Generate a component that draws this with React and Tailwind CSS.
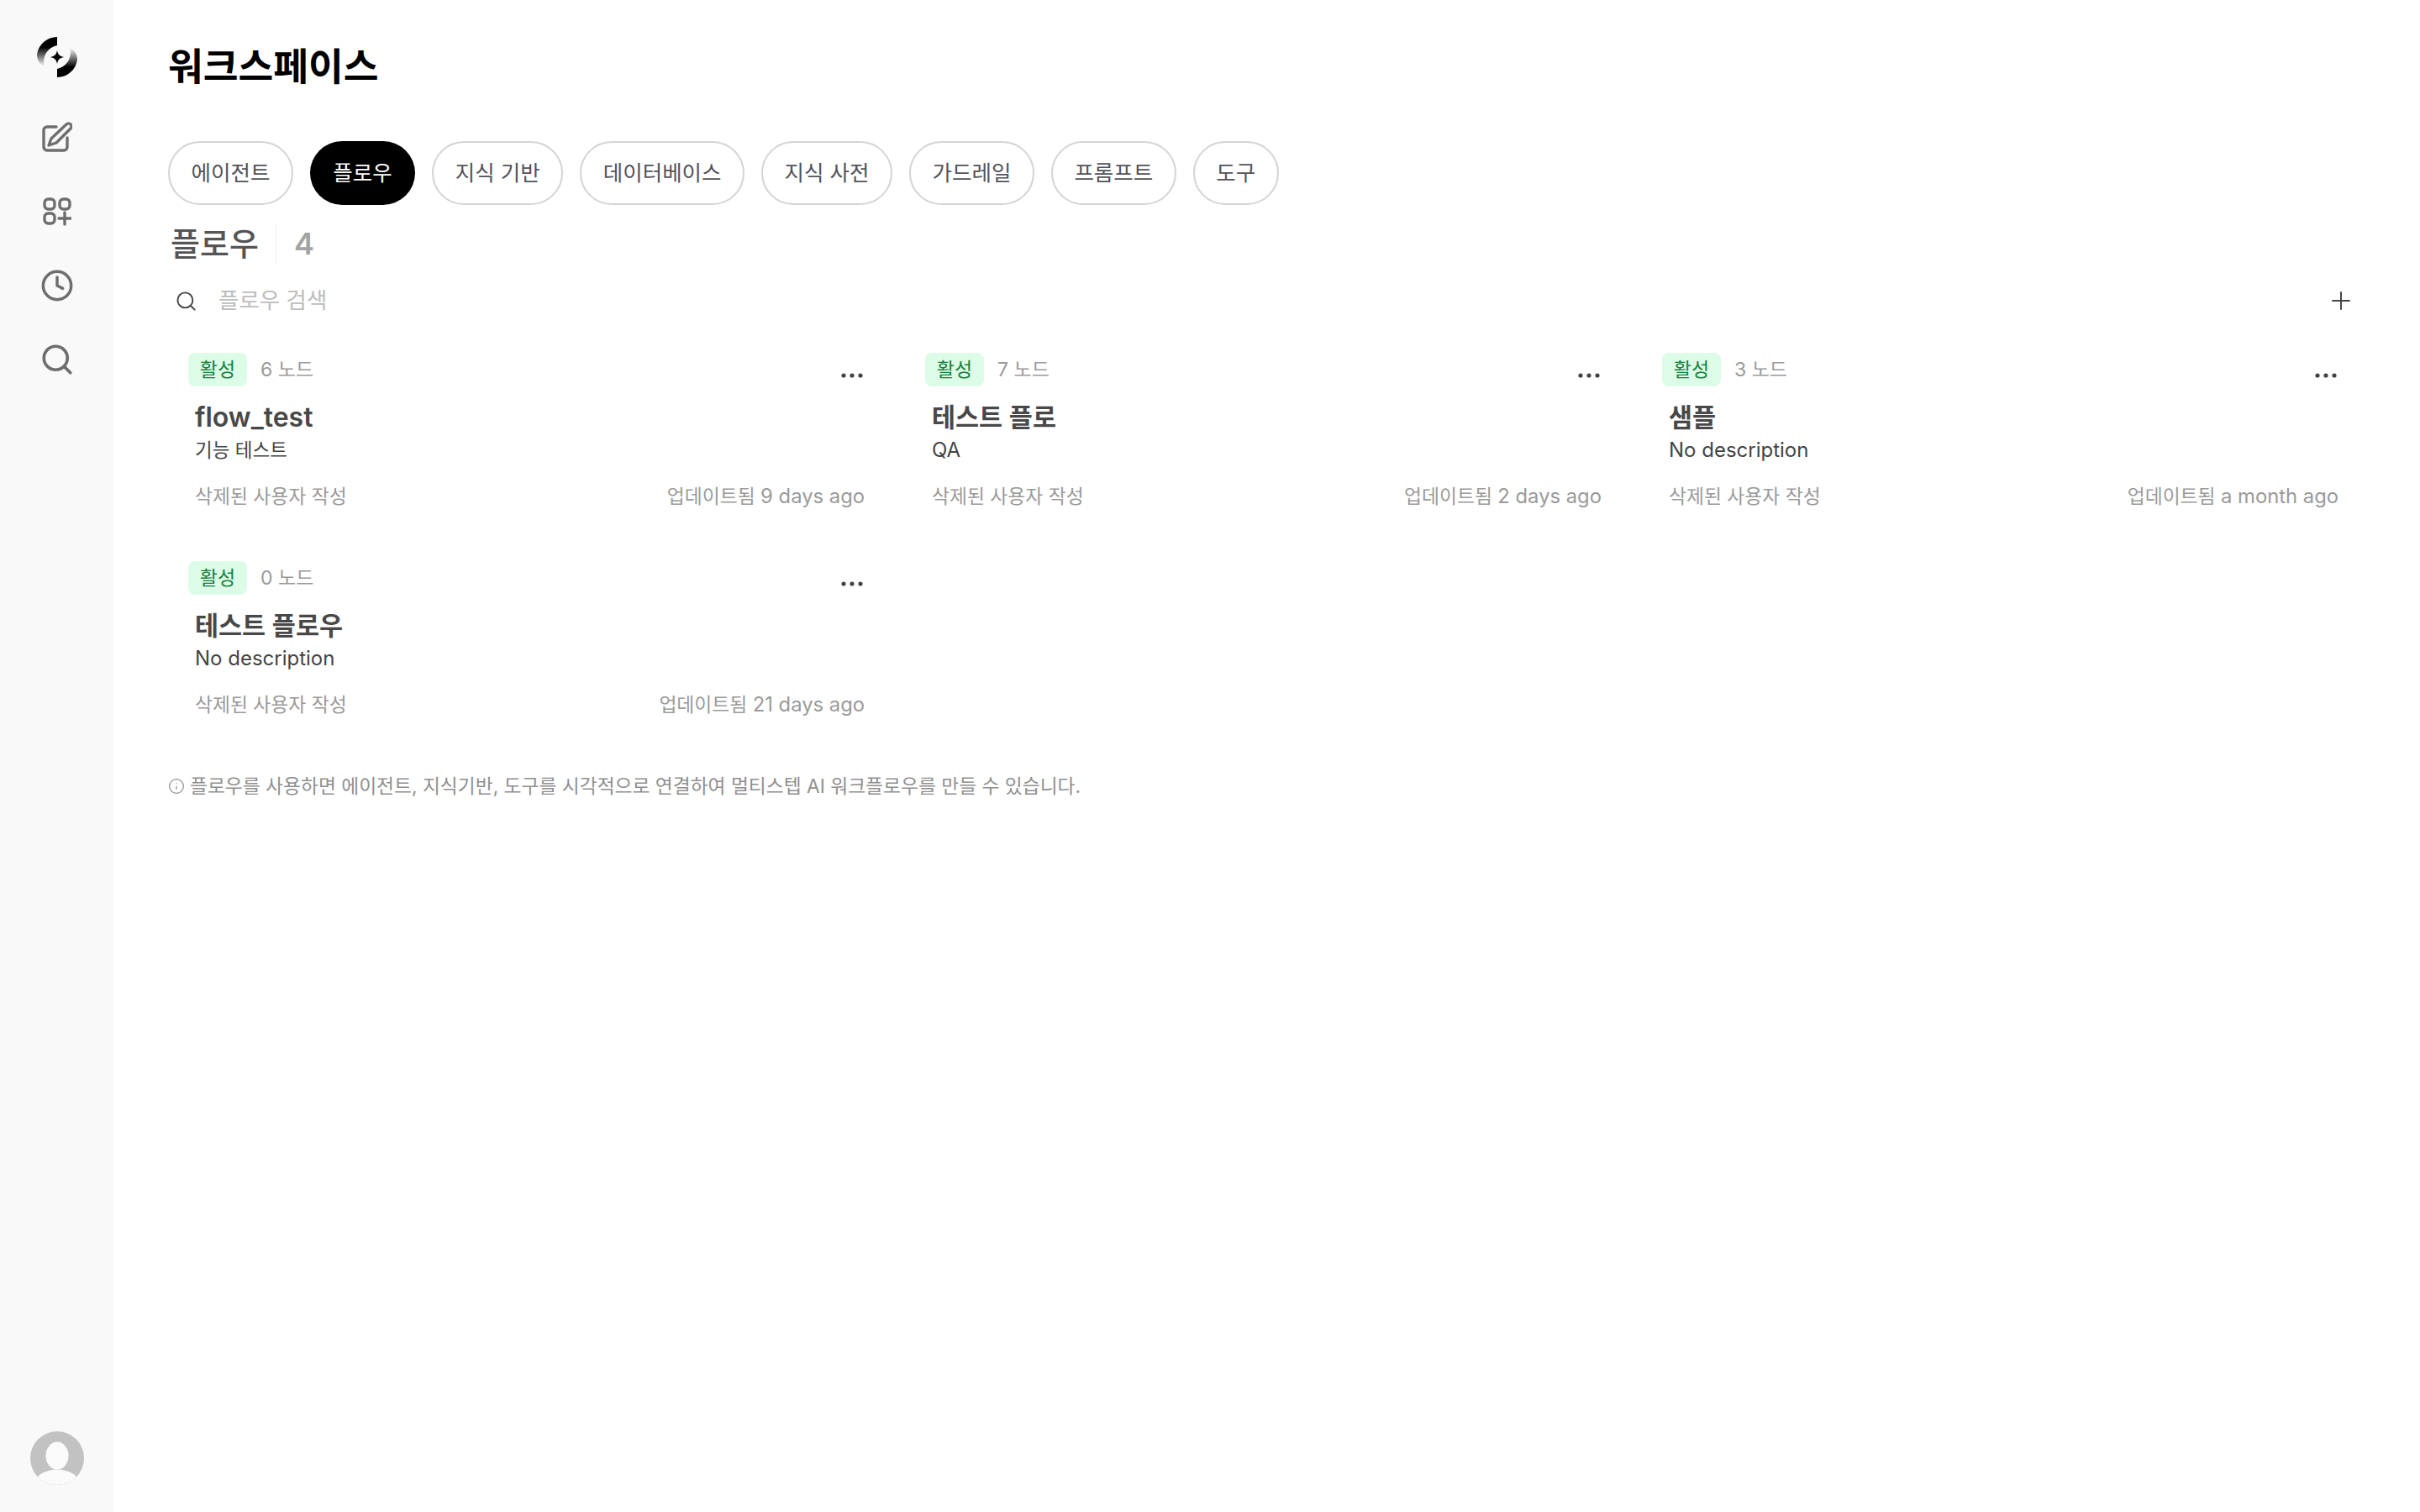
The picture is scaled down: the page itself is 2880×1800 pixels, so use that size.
import React from 'react';
import { Clock, Search, Plus, Info } from 'lucide-react';

const font = { fontFamily: '"Inter", "Noto Sans CJK KR", sans-serif' };

const tabs = ['에이전트', '플로우', '지식 기반', '데이터베이스', '지식 사전', '가드레일', '프롬프트', '도구'];

const flows = [
  { nodes: 6, title: 'flow_test', titleSize: 'text-[32px]', desc: '기능 테스트', descSize: 'text-[22.5px]', updated: '9 days ago' },
  { nodes: 7, title: '테스트 플로', titleSize: 'text-[30.5px]', desc: 'QA', descSize: 'text-[24px]', updated: '2 days ago' },
  { nodes: 3, title: '샘플', titleSize: 'text-[30.5px]', desc: 'No description', descSize: 'text-[24px]', updated: 'a month ago' },
  { nodes: 0, title: '테스트 플로우', titleSize: 'text-[30.5px]', desc: 'No description', descSize: 'text-[24px]', updated: '21 days ago' },
];

const Logo = () => (
  <svg width="48" height="48" viewBox="0 0 48 48">
    <defs>
      <linearGradient id="logoA" x1="0" y1="0" x2="0" y2="1">
        <stop offset="0.35" stopColor="#000" />
        <stop offset="1" stopColor="#000" stopOpacity="0" />
      </linearGradient>
      <linearGradient id="logoB" x1="0" y1="1" x2="0" y2="0">
        <stop offset="0.35" stopColor="#000" />
        <stop offset="1" stopColor="#000" stopOpacity="0" />
      </linearGradient>
    </defs>
    <path d="M24 0 A24 24 0 0 0 0 21 C0 28 4 33 9 35 C6 27 10 13 24 10 Z" fill="url(#logoA)" />
    <path d="M24 48 A24 24 0 0 0 48 27 C48 20 44 15 39 13 C42 21 38 35 24 38 Z" fill="url(#logoB)" />
    <path d="M24 16 C25 21 27 23 32 24 C27 25 25 27 24 32 C23 27 21 25 16 24 C21 23 23 21 24 16 Z" fill="#000" />
  </svg>
);

const EditIcon = () => (
  <svg width="36" height="36" viewBox="0 0 36 36" fill="none" stroke="#6e6e6e" strokeWidth="3.4" strokeLinecap="round" strokeLinejoin="round">
    <path d="M17 6 H6 a4 4 0 0 0 -4 4 V30 a4 4 0 0 0 4 4 H26 a4 4 0 0 0 4 -4 V19" />
    <path d="M29 3 a3 3 0 0 1 5 5 L17 25 L8 28 L11 20 Z" />
  </svg>
);

const AppsIcon = () => (
  <svg width="34" height="34" viewBox="0 0 34 34" fill="none" stroke="#6e6e6e" strokeWidth="3.4" strokeLinecap="round" strokeLinejoin="round">
    <rect x="2" y="2" width="12" height="12" rx="4.5" />
    <rect x="20" y="2" width="12" height="12" rx="4.5" />
    <rect x="2" y="19" width="12" height="12" rx="4.5" />
    <path d="M26 18 V32 M19 25 H33" />
  </svg>
);

const Avatar = () => (
  <svg width="64" height="64" viewBox="0 0 66 66">
    <defs>
      <clipPath id="avatarClip">
        <circle cx="33" cy="33" r="33" />
      </clipPath>
    </defs>
    <g clipPath="url(#avatarClip)">
      <rect width="66" height="66" fill="#c2c2c2" />
      <ellipse cx="33" cy="30" rx="14" ry="17" fill="#fafafa" />
      <ellipse cx="33" cy="62" rx="26" ry="15" fill="#fafafa" />
    </g>
  </svg>
);

const Sidebar = () => (
  <aside className="flex h-full w-[135px] shrink-0 flex-col items-center bg-[#f9f9f9] pt-[44px] pb-[32px]">
    <Logo />
    <div className="mt-[53px] flex flex-col items-center">
      <div className="flex h-[36px] items-center"><EditIcon /></div>
      <div className="mt-[54px] flex h-[34px] items-center"><AppsIcon /></div>
      <div className="mt-[53px] flex h-[36px] items-center"><Clock size={40} strokeWidth={2.1} color="#6e6e6e" /></div>
      <div className="mt-[52px] flex h-[36px] items-center"><Search size={42} strokeWidth={2.1} color="#6e6e6e" /></div>
    </div>
    <div className="mt-auto"><Avatar /></div>
  </aside>
);

const FlowCard = ({ flow }) => (
  <div className="flex h-[200px] flex-col pl-[16px] pr-[16px]">
    <div className="-ml-[8px] flex h-[40px] items-start">
      <span className="flex h-[40px] w-[70px] items-center justify-center rounded-[8px] bg-[#dcfce7] text-[23px] text-[#15803d]">활성</span>
      <span className="ml-[16px] mt-[6px] text-[23px] leading-[28px] text-[#9a9a9a]">{flow.nodes} 노드</span>
      <svg className="ml-auto mr-[2px] mt-[24px]" width="26" height="6" viewBox="0 0 26 6" fill="#444">
        <circle cx="3" cy="3" r="2.6" />
        <circle cx="13" cy="3" r="2.6" />
        <circle cx="23" cy="3" r="2.6" />
      </svg>
    </div>
    <div className={`mt-[17px] ${flow.titleSize} font-semibold leading-[40px] text-[#484848]`}>{flow.title}</div>
    <div className={`mt-[2px] ${flow.descSize} leading-[34px] text-[#444]`}>{flow.desc}</div>
    <div className="mt-[22px] flex items-center justify-between text-[22.8px] leading-[32px] text-[#9a9a9a]">
      <span>삭제된 사용자 작성</span>
      <span>업데이트됨 <span className="text-[23.8px]">{flow.updated}</span></span>
    </div>
  </div>
);

export default function App() {
  return (
    <div className="flex h-[1800px] w-full overflow-hidden bg-white" style={font}>
      <Sidebar />
      <main className="min-w-0 flex-1 pl-[65px] pr-[81px]">
        <h1 className="pt-[52px] text-[45.4px] font-semibold leading-[56px] text-black">워크스페이스</h1>
        <div className="mt-[60px] flex gap-[20px]">
          {tabs.map((tab) =>
            tab === '플로우' ? (
              <button key={tab} className="flex h-[76px] items-center rounded-full bg-black px-[27.5px] text-[25.5px] text-white">{tab}</button>
            ) : (
              <button key={tab} className="flex h-[76px] items-center rounded-full border-2 border-[#d4d4d8] px-[25.5px] text-[25.5px] text-[#52525b]">{tab}</button>
            )
          )}
        </div>
        <div className="mt-[22px] flex h-[48px] items-center pl-[3px]">
          <span className="text-[38px] font-medium leading-[48px] text-[#555]">플로우</span>
          <span className="ml-[20px] h-[48px] w-px bg-[#f0f0f0]" />
          <span className="ml-[21px] text-[36px] font-semibold text-[#a3a3a3]">4</span>
        </div>
        <div className="mt-[24px] flex h-[40px] items-center">
          <Search className="ml-[8px]" size={27} strokeWidth={1.7} color="#444" />
          <span className="ml-[25px] text-[26.5px] text-[#bcbcbc]">플로우 검색</span>
          <Plus className="ml-auto -mr-[4px]" size={34} strokeWidth={1.4} color="#444" />
        </div>
        <div className="mx-[16px] mt-[42px] mr-0 grid grid-cols-3 gap-x-[48px] gap-y-[48px]">
          {flows.map((flow) => (
            <FlowCard key={flow.title} flow={flow} />
          ))}
        </div>
        <div className="mt-[52px] flex items-center text-[22.75px] leading-[32px] text-[#8f8f8f]">
          <Info size={20} strokeWidth={1.5} color="#8f8f8f" />
          <span className="ml-[6px]">플로우를 사용하면 에이전트, 지식기반, 도구를 시각적으로 연결하여 멀티스텝 AI 워크플로우를 만들 수 있습니다.</span>
        </div>
      </main>
    </div>
  );
}
